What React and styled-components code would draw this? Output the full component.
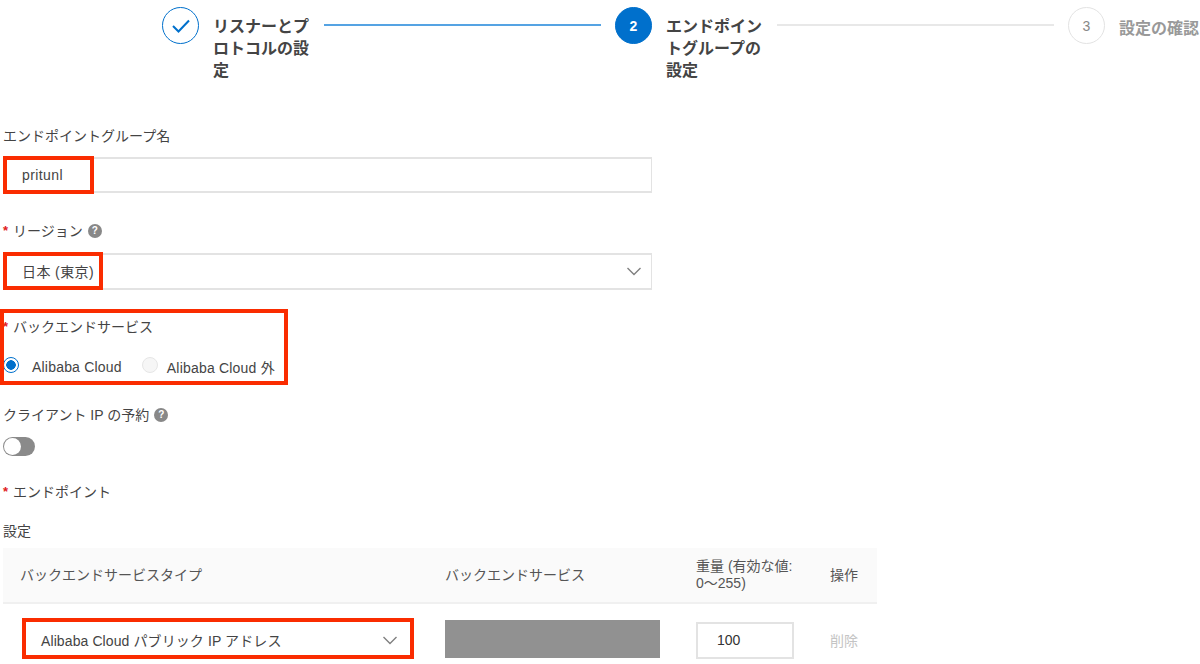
import React from 'react';
import styled, { createGlobalStyle } from 'styled-components';

const Global = createGlobalStyle`
  html, body { margin: 0; padding: 0; background: #fff; }
  body { font-family: "Liberation Sans", "Noto Sans CJK JP", sans-serif; color: #444; overflow: hidden; }
`;
const Page = styled.div`
  position: relative;
  width: 1200px;
  height: 664px;
  overflow: hidden;
`;
const Stepper = styled.div`
  display: flex;
  align-items: flex-start;
  height: 126px;
  padding: 7px 0 0 162px;
  box-sizing: border-box;
  width: 1300px;
`;
const Step = styled.div`
  display: flex;
  align-items: flex-start;
  flex: none;
  width: ${p => (p.$last ? 'auto' : '453px')};
`;
const Circle = styled.div`
  flex: none;
  box-sizing: border-box;
  width: 37px;
  height: 37px;
  border-radius: 50%;
  display: flex;
  align-items: center;
  justify-content: center;
  font-size: 14px;
  font-weight: ${p => (p.$state === 'current' ? 700 : 400)};
  color: ${p => (p.$state === 'current' ? '#fff' : '#888')};
  background: ${p => (p.$state === 'current' ? '#0070cc' : '#fff')};
  border: 1px solid ${p => (p.$state === 'todo' ? '#e3e3e3' : '#0070cc')};
`;
const StepTitle = styled.div`
  flex: none;
  width: ${p => (p.$last ? 'auto' : '97px')};
  margin-left: 14px;
  padding-top: ${p => (p.$last ? 11 : 9)}px;
  font-size: 16px;
  line-height: 22px;
  font-weight: 700;
  white-space: ${p => (p.$last ? 'nowrap' : 'normal')};
  color: ${p => (p.$last ? '#999' : '#444')};
`;
const Connector = styled.div`
  flex: 1;
  height: 2px;
  margin: 17px 14px 0;
  background: ${p => (p.$done ? '#55a3e3' : '#e8e8e8')};
`;
const Form = styled.div`
  padding-left: 3px;
`;
const Label = styled.div`
  display: flex;
  align-items: center;
  height: 20px;
  font-size: 14px;
  line-height: 20px;
  color: #444;
  margin-top: ${p => p.$top || 0}px;
  margin-bottom: ${p => p.$bottom || 0}px;
`;
const Star = styled.span`
  color: #e02020;
  font-size: 13px;
  font-weight: 700;
  width: 10px;
  flex: none;
`;
const Help = styled.span`
  flex: none;
  width: 14px;
  height: 14px;
  margin-left: 5px;
  border-radius: 50%;
  background: #888;
  color: #fff;
  font-size: 10px;
  font-weight: 700;
  line-height: 14px;
  text-align: center;
`;
const TextBox = styled.div`
  box-sizing: border-box;
  width: 649px;
  height: ${p => p.$h || 36}px;
  display: flex;
  align-items: center;
  justify-content: space-between;
  padding: 0 9px 0 18px;
  border: 1px solid #e3e3e3;
  border-width: 2px 1px;
  font-size: 14px;
  line-height: 16px;
  letter-spacing: 0.4px;
  color: #444;
`;
const Radios = styled.div`
  display: flex;
  align-items: center;
  box-sizing: border-box;
  height: 20px;
  margin-top: 19px;
  padding-top: 1px;
  font-size: 14px;
`;
const Radio = styled.span`
  flex: none;
  box-sizing: border-box;
  width: 16px;
  height: 16px;
  border-radius: 50%;
  border: ${p => (p.$on ? '1px solid #0070cc' : '1px solid #e6e6e6')};
  background: ${p => (p.$on ? 'radial-gradient(circle, #0070cc 0 4.5px, #fff 5px)' : '#f6f6f6')};
  margin-top: -3px;
`;
const RadioText = styled.span`
  margin-left: ${p => p.$gap}px;
  margin-right: ${p => p.$after || 0}px;
  white-space: nowrap;
  letter-spacing: 0.2px;
`;
const Toggle = styled.div`
  position: relative;
  box-sizing: border-box;
  width: 32px;
  height: 19px;
  margin-top: 12px;
  border-radius: 10px;
  background: #8a8a8a;
`;
const Knob = styled.span`
  position: absolute;
  left: 1px;
  top: 1px;
  width: 17px;
  height: 17px;
  border-radius: 50%;
  background: #fff;
`;
const Table = styled.div`
  width: 874px;
  margin-top: 7px;
`;
const Row = styled.div`
  display: grid;
  grid-template-columns: 425px 250px 135px 64px;
  align-items: center;
  height: ${p => p.$h}px;
  box-sizing: border-box;
  background: ${p => p.$bg || '#fff'};
  border-bottom: ${p => (p.$head ? '2px solid #f0f0f0' : 'none')};
`;
const HeadCell = styled.div`
  padding: 0 14px 0 ${p => p.$pad ?? 17}px;
  font-size: 14px;
  line-height: 17px;
  color: #555;
`;
const BodyCell = styled.div`
  padding: 0 0 0 ${p => p.$pad ?? 18}px;
  display: flex;
  align-items: center;
`;
const RowSelect = styled.div`
  box-sizing: border-box;
  width: 384px;
  height: 36px;
  margin-left: 23px;
  padding: 0 12px 0 15px;
  display: flex;
  align-items: center;
  justify-content: space-between;
  font-size: 14px;
  color: #444;
  letter-spacing: 0.1px;
`;
const Masked = styled.div`
  width: 215px;
  height: 38px;
  margin-bottom: 2px;
  background: #919191;
`;
const Weight = styled.div`
  box-sizing: border-box;
  width: 98px;
  height: 37px;
  padding-left: 19px;
  display: flex;
  align-items: center;
  border: 2px solid #e3e3e3;
  font-size: 14px;
  color: #333;
`;
const Remove = styled.span`
  margin-left: -1px;
  font-size: 14px;
  color: #c4c4c4;
`;
const Marker = styled.div`
  position: absolute;
  left: ${p => p.$x}px;
  top: ${p => p.$y}px;
  width: ${p => p.$w}px;
  height: ${p => p.$h}px;
  box-sizing: border-box;
  border: 4px solid #fa2c00;
`;
const Chevron = () => (
  <svg width="16" height="9" viewBox="0 0 16 9" fill="none" stroke="#808080" strokeWidth="1.4">
    <path d="M1.5 1 L8 7.5 L14.5 1" />
  </svg>
);

export default function App() {
  return (
    <Page>
      <Global />
      <Stepper>
        <Step>
          <Circle $state="done">
            <svg width="18" height="14" viewBox="0 0 18 14" fill="none" stroke="#0070cc" strokeWidth="2">
              <path d="M1 7 L6.5 12.5 L17 1.5" />
            </svg>
          </Circle>
          <StepTitle>リスナーとプロトコルの設定</StepTitle>
          <Connector $done />
        </Step>
        <Step>
          <Circle $state="current">2</Circle>
          <StepTitle>エンドポイントグループの設定</StepTitle>
          <Connector />
        </Step>
        <Step $last>
          <Circle $state="todo">3</Circle>
          <StepTitle $last>設定の確認</StepTitle>
        </Step>
      </Stepper>
      <Form>
        <Label $bottom={11}>エンドポイントグループ名</Label>
        <TextBox>pritunl</TextBox>
        <Label $top={28} $bottom={12}><Star>*</Star>リージョン<Help>?</Help></Label>
        <TextBox $h={37}>日本 (東京)<Chevron /></TextBox>
        <Label $top={27}><Star>*</Star>バックエンドサービス</Label>
        <Radios>
          <Radio $on />
          <RadioText $gap={13} $after={20}>Alibaba Cloud</RadioText>
          <Radio />
          <RadioText $gap={9}>Alibaba Cloud 外</RadioText>
        </Radios>
        <Label $top={29}>クライアント IP の予約<Help>?</Help></Label>
        <Toggle><Knob /></Toggle>
        <Label $top={26}><Star>*</Star>エンドポイント</Label>
        <Label $top={19}>設定</Label>
        <Table>
          <Row $h={56} $bg="#fafafa" $head>
            <HeadCell>バックエンドサービスタイプ</HeadCell>
            <HeadCell>バックエンドサービス</HeadCell>
            <HeadCell $pad={18}>重量 (有効な値: 0〜255)</HeadCell>
            <HeadCell>操作</HeadCell>
          </Row>
          <Row $h={72}>
            <BodyCell $pad={0}>
              <RowSelect>Alibaba Cloud パブリック IP アドレス<Chevron /></RowSelect>
            </BodyCell>
            <BodyCell $pad={17}><Masked /></BodyCell>
            <BodyCell><Weight>100</Weight></BodyCell>
            <BodyCell><Remove>削除</Remove></BodyCell>
          </Row>
        </Table>
      </Form>
      <Marker $x={3} $y={156} $w={91} $h={38} />
      <Marker $x={3} $y={252} $w={100} $h={38} />
      <Marker $x={0} $y={309} $w={288} $h={76} />
      <Marker $x={22} $y={618} $w={392} $h={41} />
    </Page>
  );
}
